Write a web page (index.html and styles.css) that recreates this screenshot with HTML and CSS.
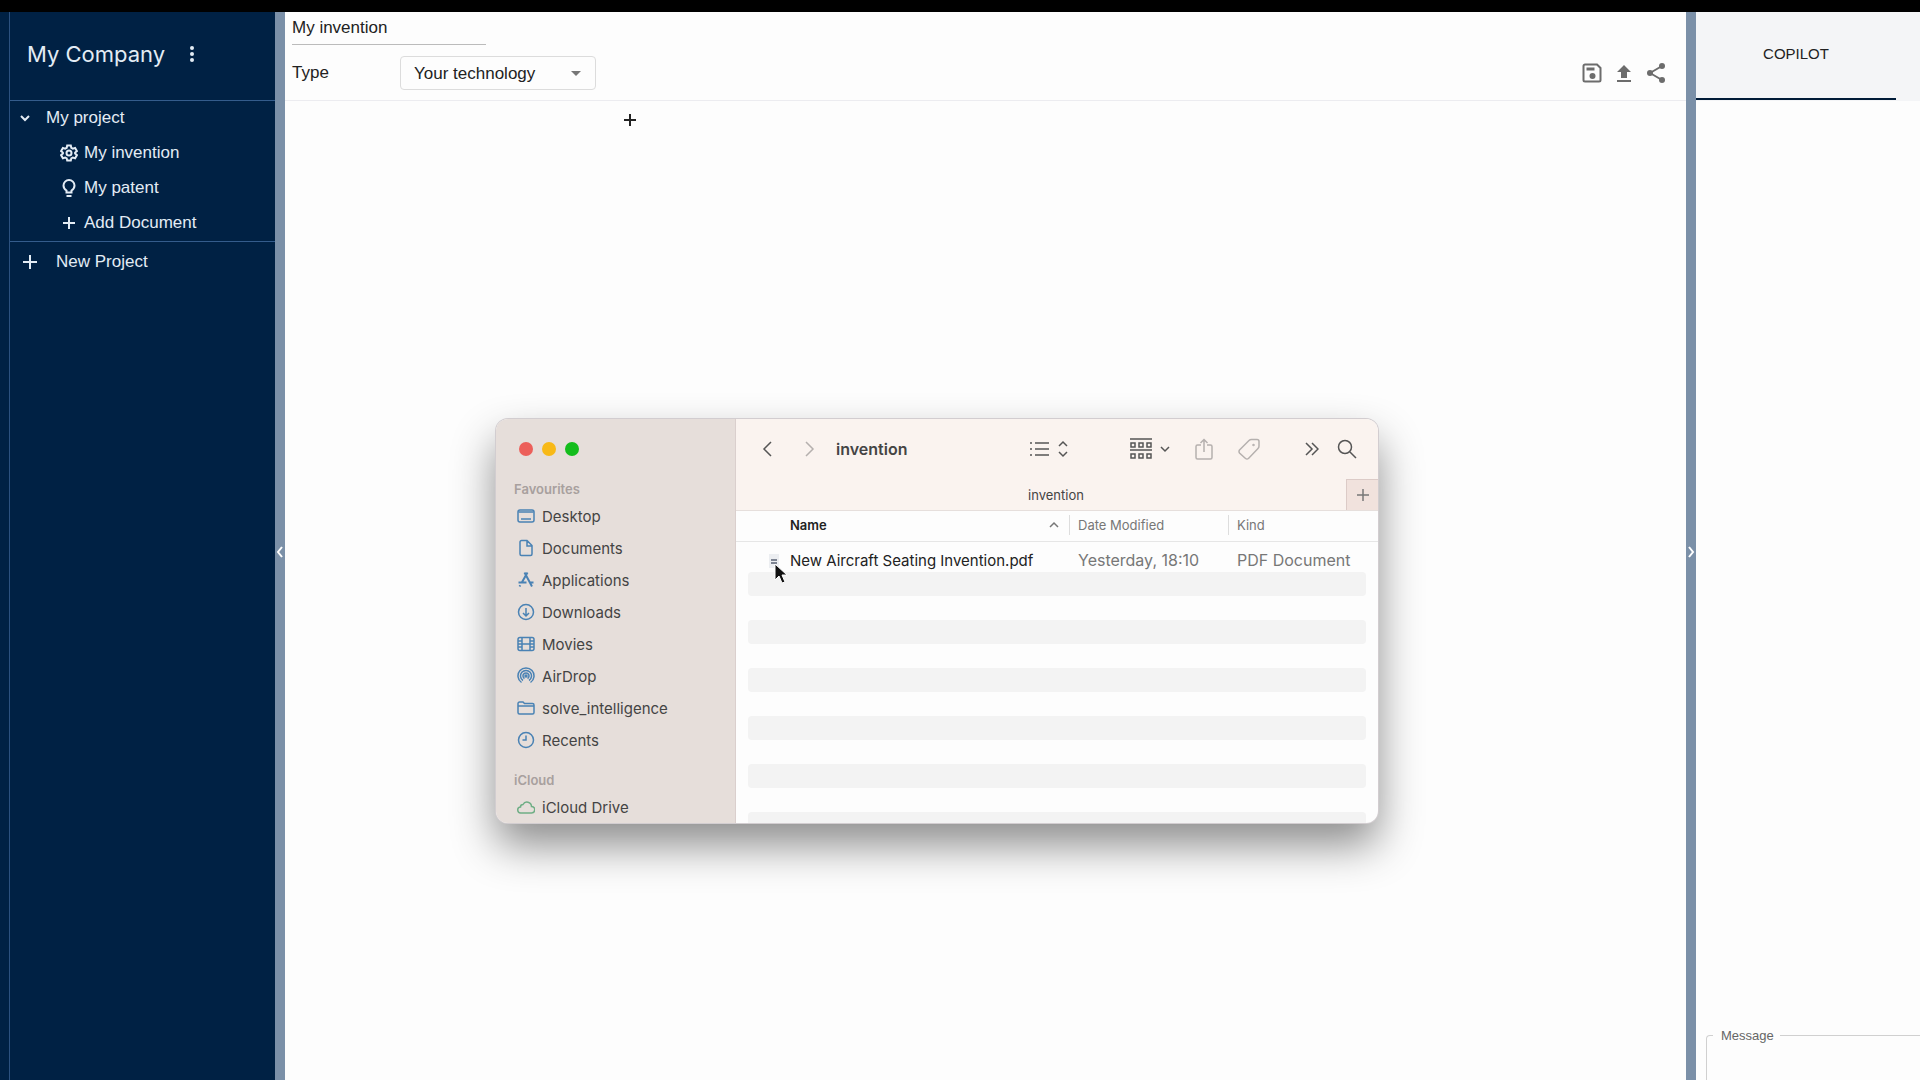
FILE: index.html
```html
<!DOCTYPE html>
<html lang="en">
<head>
    <meta charset="UTF-8">
    <meta name="viewport" content="width=device-width, initial-scale=1.0">
    <title>My invention</title>
    <link rel="stylesheet" href="styles.css">
</head>
<body>
    <div class="app">
        <!-- Project sidebar -->
        <nav class="sidebar">
            <div class="sidebar-inner">
                <div class="company">
                    <h1>My Company</h1>
                    <button class="icon-btn" aria-label="Company menu">
                        <svg width="6" height="18" viewBox="0 0 6 18" fill="currentColor"><circle cx="3" cy="3" r="2"/><circle cx="3" cy="9" r="2"/><circle cx="3" cy="15" r="2"/></svg>
                    </button>
                </div>
                <div class="project">
                    <button class="nav-item nav-project">
                        <svg width="12" height="12" viewBox="0 0 12 12" class="line"><path d="M2 4l4 4 4-4"/></svg>
                        My project
                    </button>
                    <button class="nav-item nav-doc">
                        <svg width="18" height="18" viewBox="0 0 18 18" class="line"><path d="M7.2 1.5h3.6l.5 2.3 1.5.9 2.3-.7 1.8 3.1-1.8 1.5v1l1.8 1.5-1.8 3.1-2.3-.7-1.5.9-.5 2.2H7.2l-.5-2.2-1.5-.9-2.3.7-1.8-3.1 1.8-1.5v-1L1.1 7.1 2.9 4l2.3.7 1.5-.9z"/><circle cx="9" cy="9" r="2.5"/></svg>
                        My invention
                    </button>
                    <button class="nav-item nav-doc">
                        <svg width="18" height="18" viewBox="0 0 18 18" class="line"><path d="M6.5 13.5v-2c-2-1.3-3-2.7-3-5a5.5 5.5 0 0 1 11 0c0 2.3-1 3.7-3 5v2zM6.5 17h5"/></svg>
                        My patent
                    </button>
                    <button class="nav-item nav-doc">
                        <svg width="18" height="18" viewBox="0 0 18 18" class="line"><path d="M9 3v12M3 9h12"/></svg>
                        Add Document
                    </button>
                </div>
                <button class="nav-item nav-new">
                    <svg width="16" height="16" viewBox="0 0 16 16" class="line"><path d="M8 1v14M1 8h14"/></svg>
                    New Project
                </button>
            </div>
        </nav>

        <button class="splitter" aria-label="Collapse sidebar">
            <svg width="8" height="14" viewBox="0 0 8 14" class="line"><path d="M6 2L2 7l4 5"/></svg>
        </button>

        <!-- Document editor -->
        <main class="editor">
            <header class="editor-head">
                <input class="doc-title" type="text" value="My invention" aria-label="Document title">
                <div class="type-row">
                    <label for="docType">Type</label>
                    <div class="select-wrap">
                        <select id="docType">
                            <option>Your technology</option>
                        </select>
                        <svg class="caret" width="10" height="5" viewBox="0 0 10 5"><path d="M0 0h10L5 5z" fill="#777"/></svg>
                    </div>
                    <div class="actions">
                        <button class="icon-btn" aria-label="Save">
                            <svg width="20" height="20" viewBox="0 0 20 20" fill="none" stroke="currentColor" stroke-width="2"><path d="M3 1.5h12L18.5 5v12a1.5 1.5 0 0 1-1.5 1.5H3A1.5 1.5 0 0 1 1.5 17V3A1.5 1.5 0 0 1 3 1.5z"/><path d="M4.5 4.5h8v3h-8z" fill="currentColor" stroke="none"/><circle cx="10.5" cy="13" r="3" fill="currentColor" stroke="none"/></svg>
                        </button>
                        <button class="icon-btn" aria-label="Upload">
                            <svg width="20" height="20" viewBox="0 0 20 20" fill="currentColor"><path d="M10 2L3 9h4v6h6V9h4zM3 17h14v2H3z"/></svg>
                        </button>
                        <button class="icon-btn" aria-label="Share">
                            <svg width="20" height="20" viewBox="0 0 20 20" fill="currentColor"><path d="M4 10l12-7M4 10l12 7" stroke="currentColor" stroke-width="2"/><circle cx="4" cy="10" r="3"/><circle cx="16" cy="3" r="3"/><circle cx="16" cy="17" r="3"/></svg>
                        </button>
                    </div>
                </div>
            </header>
            <section class="canvas">
                <button class="icon-btn add-block" aria-label="Add block">
                    <svg width="14" height="14" viewBox="0 0 14 14" class="line"><path d="M7 1v12M1 7h12"/></svg>
                </button>
            </section>
        </main>

        <button class="splitter" aria-label="Collapse copilot">
            <svg width="8" height="14" viewBox="0 0 8 14" class="line"><path d="M2 2l4 5-4 5"/></svg>
        </button>

        <!-- Copilot panel -->
        <aside class="copilot">
            <div class="tabs">
                <button class="tab">COPILOT</button>
            </div>
            <fieldset class="message">
                <legend><label for="message">Message</label></legend>
                <textarea id="message" rows="1"></textarea>
            </fieldset>
        </aside>
    </div>

    <!-- File browser window -->
    <div class="finder">
        <div class="places">
            <div class="lights">
                <button class="light red" aria-label="Close"></button>
                <button class="light yellow" aria-label="Minimise"></button>
                <button class="light green" aria-label="Zoom"></button>
            </div>
            <h2>Favourites</h2>
            <ul>
                <li><svg viewBox="0 0 18 18"><rect x="1" y="3" width="16" height="12" rx="2"/><path d="M1.5 5h15M4 12h10"/></svg>Desktop</li>
                <li><svg viewBox="0 0 18 18"><path d="M4.5 1.5H10l5 5V15a1.5 1.5 0 0 1-1.5 1.5h-9A1.5 1.5 0 0 1 3 15V3a1.5 1.5 0 0 1 1.5-1.5zM10 1.5V7h5"/></svg>Documents</li>
                <li><svg viewBox="0 0 18 18"><path d="M10.5 1.5L4.5 12M2.5 15.5l.8-1.3M7.5 1.5l7.5 14M1.5 11.500h8M13 11.5h3.5" stroke-width="2"/></svg>Applications</li>
                <li><svg viewBox="0 0 18 18"><circle cx="9" cy="9" r="7.5"/><path d="M9 5v8M6 10l3 3 3-3"/></svg>Downloads</li>
                <li><svg viewBox="0 0 18 18"><rect x="1" y="2.5" width="16" height="13" rx="2"/><path d="M5 2.5v13M13 2.5v13M5 9h8M1 6h4M1 9h4M1 12h4M13 6h4M13 9h4M13 12h4"/></svg>Movies</li>
                <li><svg viewBox="0 0 18 18"><path d="M4.5 15.5a8 8 0 1 1 9 0M6 13.5a5.5 5.5 0 1 1 6 0M7.5 11.5a3 3 0 1 1 3 0"/><circle cx="9" cy="9" r="1" fill="currentColor"/></svg>AirDrop</li>
                <li><svg viewBox="0 0 18 18"><path d="M1 4.5A1.5 1.5 0 0 1 2.5 3H6l1.5 1.5h8A1.5 1.5 0 0 1 17 6v7.5a1.5 1.5 0 0 1-1.5 1.5h-13A1.5 1.5 0 0 1 1 13.5zM1 7h16"/></svg>solve_intelligence</li>
                <li><svg viewBox="0 0 18 18"><circle cx="9" cy="9" r="7.5"/><path d="M9 4.5V9H5.5"/></svg>Recents</li>
            </ul>
            <h2>iCloud</h2>
            <ul>
                <li><svg class="cloud" viewBox="0 0 18 18"><path d="M4 15a3 3 0 0 1-.5-6A2.500 2.500 0 0 1 6 6.500a4.500 4.500 0 0 1 8.500 2A3.200 3.200 0 0 1 14.500 15z"/></svg>iCloud Drive</li>
            </ul>
        </div>

        <div class="files">
            <div class="toolbar">
                <button class="icon-btn" aria-label="Back"><svg width="16" height="18" viewBox="0 0 16 18" class="line"><path d="M11 2L4 9l7 7"/></svg></button>
                <button class="icon-btn dim forward" aria-label="Forward"><svg width="16" height="18" viewBox="0 0 16 18" class="line"><path d="M5 2l7 7-7 7"/></svg></button>
                <h2>invention</h2>
                <button class="icon-btn view" aria-label="List view">
                    <svg width="20" height="16" viewBox="0 0 20 16" class="line"><path d="M0 2h2M0 8h2M0 14h2M5 2h14M5 8h14M5 14h14"/></svg>
                    <svg width="10" height="18" viewBox="0 0 10 18" class="line"><path d="M1 6l4-4 4 4M1 12l4 4 4-4"/></svg>
                </button>
                <button class="icon-btn group" aria-label="Group">
                    <svg width="22" height="22" viewBox="0 0 22 22" class="line"><path d="M0 1h22M0 12h22"/><path d="M1 5h4v4H1zM9 5h4v4H9zM17 5h4v4h-4zM1 16h4v4H1zM9 16h4v4H9zM17 16h4v4h-4z"/></svg>
                    <svg width="10" height="10" viewBox="0 0 10 10" class="line"><path d="M1 3l4 4 4-4"/></svg>
                </button>
                <button class="icon-btn dim share" aria-label="Share"><svg width="18" height="22" viewBox="0 0 18 22" class="line"><path d="M6 7H2.5A1.5 1.5 0 0 0 1 8.5v11A1.5 1.5 0 0 0 2.5 21h13a1.5 1.5 0 0 0 1.5-1.5v-11A1.5 1.5 0 0 0 15.5 7H12M9 14V1.5M5.5 5L9 1.5 12.5 5"/></svg></button>
                <button class="icon-btn dim tag" aria-label="Tags"><svg width="22" height="22" viewBox="0 0 22 22" class="line"><path d="M1.5 12L11 2.5q1-1 2.500-1H19q2 0 2 2V8q0 1.500-1 2.500l-9.500 10q-1.500 1-3 0l-6-5.500q-1-1.500 0-3z"/><circle cx="15.5" cy="7" r=".5"/></svg></button>
                <button class="icon-btn more" aria-label="More"><svg width="14" height="14" viewBox="0 0 14 14" class="line"><path d="M1 1l6 6-6 6M7 1l6 6-6 6"/></svg></button>
                <button class="icon-btn search" aria-label="Search"><svg width="20" height="20" viewBox="0 0 20 20" class="line"><circle cx="8" cy="8" r="6.5"/><path d="M13 13l6 6"/></svg></button>
            </div>
            <div class="tabbar">
                <span>invention</span>
                <button aria-label="New tab"><svg width="12" height="12" viewBox="0 0 12 12" class="line"><path d="M6 0v12M0 6h12"/></svg></button>
            </div>
            <table>
                <colgroup>
                    <col>
                    <col class="col-date">
                    <col class="col-kind">
                </colgroup>
                <thead>
                    <tr>
                        <th class="name"><div>Name <svg width="10" height="8" viewBox="0 0 10 8" class="line"><path d="M1 6l4-4 4 4"/></svg></div></th>
                        <th><div>Date Modified</div></th>
                        <th><div>Kind</div></th>
                    </tr>
                </thead>
                <tbody>
                    <tr class="file">
                        <td class="name">New Aircraft Seating Invention.pdf</td>
                        <td>Yesterday, 18:10</td>
                        <td>PDF Document</td>
                    </tr>
                    <tr><td colspan="3"></td></tr>
                    <tr><td colspan="3"></td></tr>
                    <tr><td colspan="3"></td></tr>
                    <tr><td colspan="3"></td></tr>
                    <tr><td colspan="3"></td></tr>
                    <tr><td colspan="3"></td></tr>
                    <tr><td colspan="3"></td></tr>
                    <tr><td colspan="3"></td></tr>
                    <tr><td colspan="3"></td></tr>
                    <tr><td colspan="3"></td></tr>
                    <tr><td colspan="3"></td></tr>
                </tbody>
            </table>
        </div>

        <!-- Dragged file and pointer -->
        <svg class="pointer" width="22" height="32" viewBox="0 0 22 32">
            <rect x="1" y="1" width="10" height="14" fill="#eceef1"/>
            <path d="M3 7h6M3 10h6" stroke="#7d8492" stroke-width="2"/>
            <path d="M7 11v16l4-4 3 7 3-1-3-7h5z" fill="#111" stroke="#fff"/>
        </svg>
    </div>
</body>
</html>
```
FILE: styles.css
```css
/* Global Styles */
* {
    margin: 0;
    padding: 0;
    box-sizing: border-box;
}
body {
    font-family: 'Liberation Sans', Arial, sans-serif;
    font-size: 17px;
    color: #222;
    background: #fdfdfd;
    height: 100vh;
    overflow: hidden;
}
button {
    font: inherit;
    color: inherit;
    background: none;
    border: none;
    cursor: pointer;
}
svg {
    display: block;
    flex: none;
}
.line {
    fill: none;
    stroke: currentColor;
    stroke-width: 2;
}
.icon-btn {
    display: flex;
    align-items: center;
}

.app {
    display: flex;
    height: 100vh;
    border-top: 12px solid #000;
}

/* Sidebar */
.sidebar {
    width: 275px;
    padding-left: 9px;
    background: #002144;
    color: #e3ecf5;
}
.sidebar-inner {
    height: 100%;
    border-left: 1px solid #2c517f;
}
.company {
    display: flex;
    align-items: center;
    gap: 24px;
    height: 89px;
    padding: 0 17px 4px;
    border-bottom: 1px solid #345c8c;
}
.company h1 {
    font-family: Inter, sans-serif;
    font-size: 22px;
    font-weight: 400;
}
.project {
    border-bottom: 1px solid #345c8c;
}
.nav-item {
    display: flex;
    align-items: center;
    width: 100%;
    height: 35px;
    padding-bottom: 1px;
}
.nav-project {
    gap: 15px;
    padding-left: 9px;
}
.nav-doc {
    gap: 6px;
    padding-left: 50px;
}
.nav-new {
    gap: 18px;
    height: 40px;
    padding-left: 12px;
}

.splitter {
    display: flex;
    align-items: center;
    justify-content: center;
    width: 10px;
    padding-top: 12px;
    background: #7b90a8;
    color: #fff;
}

/* Editor */
.editor {
    flex: 1;
    min-width: 0;
}
.editor-head {
    height: 89px;
    padding: 0 20px 0 7px;
    border-bottom: 1px solid #ececf0;
}
.doc-title {
    display: block;
    width: 194px;
    height: 33px;
    border: none;
    border-bottom: 1px solid #bbb;
    background: none;
    font: inherit;
    color: inherit;
}
.type-row {
    display: flex;
    align-items: center;
    height: 56px;
}
.type-row label {
    width: 108px;
}
.select-wrap {
    position: relative;
}
.select-wrap select {
    appearance: none;
    width: 196px;
    height: 34px;
    padding: 0 13px;
    border: 1px solid #dcdcdc;
    border-radius: 4px;
    background: none;
    font: inherit;
    color: inherit;
}
.caret {
    position: absolute;
    right: 15px;
    top: 15px;
}
.actions {
    display: flex;
    gap: 12px;
    margin-left: auto;
    color: #6c6c6c;
}
.add-block {
    margin: 12px 0 0 338px;
}

/* Copilot */
.copilot {
    display: flex;
    flex-direction: column;
    width: 224px;
    overflow: hidden;
}
.tabs {
    height: 89px;
    background: #f4f5f7;
}
.tab {
    width: 200px;
    height: 88px;
    padding-bottom: 4px;
    border-bottom: 2px solid #001b38;
    font-size: 15px;
}
.message {
    width: 320px;
    height: 52px;
    margin: auto 0 0 10px;
    padding: 0 14px;
    border: 1px solid #d0d0d0;
    border-bottom: none;
    border-radius: 4px 4px 0 0;
}
.message legend {
    margin-left: -8px;
    padding: 0 6px 0 8px;
    font-size: 13px;
    color: #666;
}
.message textarea {
    width: 100%;
    border: none;
    outline: none;
    resize: none;
    background: none;
}

/* File browser window */
.finder {
    position: absolute;
    left: 496px;
    top: 419px;
    display: flex;
    width: 882px;
    height: 404px;
    border-radius: 12px;
    background: #fdfdfd;
    font-family: Inter, sans-serif;
    font-size: 15px;
    color: #444;
    box-shadow: 0 0 0 1px #d2cdd0, 0 22px 44px rgba(0, 0, 0, 0.45);
}
.places {
    width: 240px;
    padding: 0 18px;
    overflow: hidden;
    border-right: 1px solid #dacfcd;
    border-radius: 12px 0 0 12px;
    background: #e6deda;
}
.lights {
    display: flex;
    align-items: center;
    gap: 9px;
    height: 60px;
    padding-left: 5px;
}
.light {
    width: 14px;
    height: 14px;
    border-radius: 50%;
}
.red {
    background: #ec5f5a;
}
.yellow {
    background: #f8b917;
}
.green {
    background: #14bd1c;
}
.places h2 {
    height: 21px;
    font-size: 13px;
    font-weight: 600;
    line-height: 21px;
    color: #a8a09e;
}
.places ul {
    margin-bottom: 14px;
    list-style: none;
}
.places li {
    display: flex;
    align-items: center;
    gap: 7px;
    height: 32px;
    padding-left: 3px;
}
.places li svg {
    width: 18px;
    height: 18px;
    fill: none;
    stroke: #4a82b4;
    stroke-width: 1.5;
    color: #4a82b4;
}
.places li .cloud {
    stroke: #6fae85;
}

.files {
    flex: 1;
    overflow: hidden;
    border-radius: 0 12px 12px 0;
}
.files .line {
    stroke-width: 1.5;
}
.toolbar {
    display: flex;
    align-items: center;
    height: 60px;
    padding: 0 21px 0 24px;
    background: #faf3ef;
}
.toolbar h2 {
    margin: 0 auto 0 19px;
    font-size: 16px;
    font-weight: 600;
}
.toolbar .icon-btn {
    color: #555;
}
.toolbar .dim {
    color: #b5b0ae;
}
.toolbar .forward {
    margin-left: 25px;
}
.toolbar .view {
    gap: 8px;
}
.toolbar .group {
    gap: 8px;
    margin-left: 62px;
}
.toolbar .share,
.toolbar .tag {
    margin-left: 25px;
}
.toolbar .more {
    margin-left: 45px;
}
.toolbar .search {
    margin-left: 18px;
}
.tabbar {
    display: flex;
    align-items: stretch;
    height: 32px;
    border-bottom: 1px solid #e6dfdc;
    background: #faf3ef;
    font-size: 13px;
}
.tabbar span {
    flex: 1;
    padding-left: 30px;
    line-height: 32px;
    text-align: center;
}
.tabbar button {
    display: flex;
    align-items: center;
    justify-content: center;
    width: 32px;
    border-top: 1px solid #dccbc7;
    border-left: 1px solid #dccbc7;
    background: #f1e2dd;
    color: #777;
}

/* File list */
table {
    width: 100%;
    table-layout: fixed;
    border-spacing: 0;
    color: #777;
}
.col-date {
    width: 159px;
}
.col-kind {
    width: 150px;
}
th {
    height: 31px;
    padding-bottom: 2px;
    border-bottom: 1px solid #e6e6e6;
    font-size: 13px;
    font-weight: 400;
    text-align: left;
}
th div {
    display: flex;
    align-items: center;
    justify-content: space-between;
    height: 20px;
    padding: 0 10px 0 8px;
    border-left: 1px solid #ddd;
}
th.name div {
    padding-left: 54px;
    border-left: none;
    font-weight: 600;
    color: #222;
}
th svg {
    color: #777;
}
td {
    height: 24px;
    padding: 0 12px;
    background-clip: content-box;
    border-radius: 16px / 4px;
}
tr:nth-child(even) td {
    background-color: #f3f3f3;
}
.file td {
    height: 30px;
    padding: 6px 0 0 9px;
    font-size: 16px;
    white-space: nowrap;
}
.file td.name {
    padding-left: 54px;
    font-size: 15px;
    color: #222;
}
.pointer {
    position: absolute;
    left: 272px;
    top: 134px;
}
```
